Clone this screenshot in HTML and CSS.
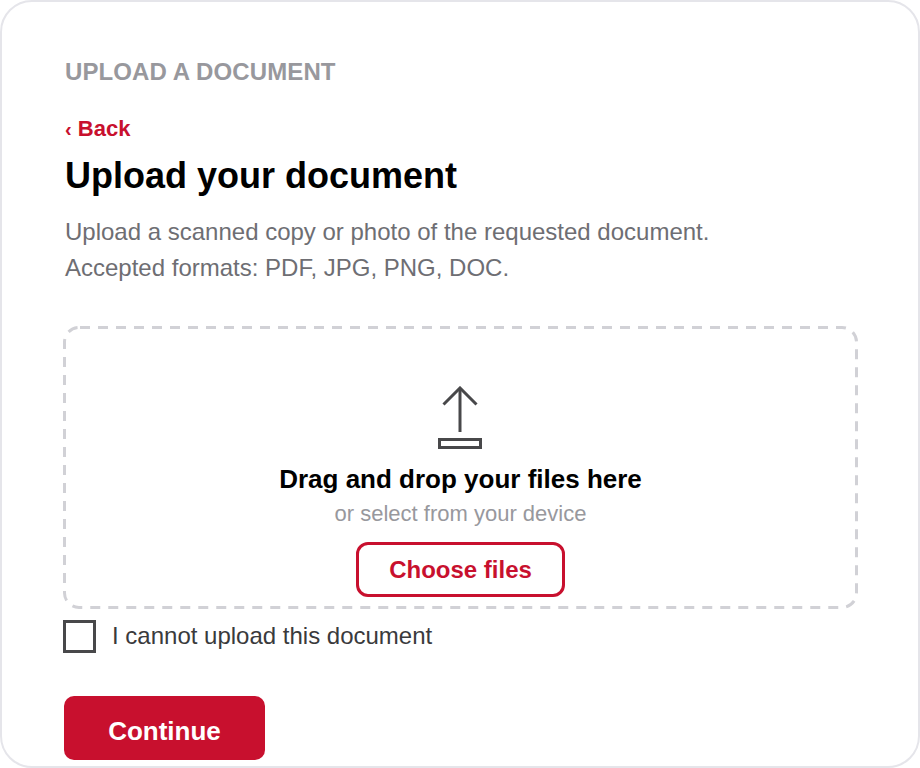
FILE: index.html
```html
<!DOCTYPE html>
<html>
<head>
    <meta charset="UTF-8">
    <title>Upload a document</title>
    <link rel="stylesheet" href="styles.css">
</head>
<body>
    <div class="card">
        <div class="eyebrow">UPLOAD A DOCUMENT</div>
        <a class="back" href="#"><span class="back-mark">‹</span> Back</a>
        <h1>Upload your document</h1>
        <p class="intro">Upload a scanned copy or photo of the requested document.<br>Accepted formats: PDF, JPG, PNG, DOC.</p>

        <div class="dropzone">
            <svg class="dash-frame" width="795" height="283" viewBox="0 0 795 283" fill="none">
                <rect x="1.500" y="1.500" width="792" height="280" rx="14.500" stroke="#d1d1d6" stroke-width="3" stroke-dasharray="10 8" stroke-dashoffset="-1"/>
            </svg>
            <svg class="upload-icon" width="44" height="64" viewBox="0 0 44 64" fill="none" stroke="#48484a" stroke-width="3">
                <path d="M22 46V2"/>
                <path d="M5.500 18.500L22 2L38.500 18.500"/>
                <rect x="1.500" y="53.500" width="41" height="8"/>
            </svg>
            <div class="drop-title">Drag and drop your files here</div>
            <div class="drop-sub">or select from your device</div>
            <button class="choose">Choose files</button>
        </div>

        <label class="check-row">
            <span class="checkbox"></span>
            <span class="check-text">I cannot upload this document</span>
        </label>

        <button class="continue">Continue</button>
    </div>
</body>
</html>
```

FILE: styles.css
```css
* {
    box-sizing: border-box;
}
body {
    margin: 0;
    font-family: "Liberation Sans", Arial, sans-serif;
    background-color: #fff;
}
.card {
    width: 920px;
    height: 768px;
    padding: 56px 60px 0 63px;
    border: 2px solid #e5e5ea;
    border-radius: 32px;
    overflow: hidden;
}
.eyebrow {
    font-size: 24px;
    line-height: 28px;
    font-weight: bold;
    letter-spacing: 0.1px;
    color: #98989d;
}
.back {
    display: block;
    margin-top: 29px;
    font-size: 22px;
    line-height: 28px;
    font-weight: bold;
    color: #c8102e;
    text-decoration: none;
}
.back-mark {
    font-size: 20px;
}
h1 {
    margin: 11px 0 0;
    font-size: 36px;
    line-height: 44px;
    color: #000;
}
.intro {
    margin: 16px 0 0;
    font-size: 24px;
    line-height: 36px;
    color: #6e6e73;
}
.dropzone {
    position: relative;
    display: flex;
    flex-direction: column;
    align-items: center;
    width: 795px;
    height: 283px;
    margin: 40px 0 0 -2px;
    padding-top: 60px;
}
.dash-frame {
    position: absolute;
    top: 0;
    left: 0;
}
.upload-icon {
    margin-right: 1px;
}
.drop-title {
    margin-top: 13px;
    font-size: 26px;
    line-height: 32px;
    font-weight: bold;
    color: #000;
}
.drop-sub {
    margin-top: 6px;
    font-size: 22px;
    line-height: 26px;
    color: #98989d;
}
.choose {
    width: 209px;
    height: 55px;
    margin-top: 15px;
    border: 3px solid #c8102e;
    border-radius: 12px;
    background-color: #fff;
    color: #c8102e;
    font-family: inherit;
    font-size: 24px;
    font-weight: bold;
}
.check-row {
    display: flex;
    align-items: center;
    gap: 16px;
    margin: 11px 0 0 -2px;
    font-size: 24px;
    line-height: 32px;
    color: #3a3a3c;
}
.checkbox {
    width: 33px;
    height: 33px;
    border: 3px solid #48484a;
}
.check-text {
    margin-top: -2px;
}
.continue {
    display: block;
    width: 201px;
    height: 64px;
    margin: 43px 0 0 -1px;
    padding-top: 7px;
    border: none;
    border-radius: 10px;
    background-color: #c8102e;
    color: #fff;
    font-family: inherit;
    font-size: 26px;
    font-weight: bold;
}
```
